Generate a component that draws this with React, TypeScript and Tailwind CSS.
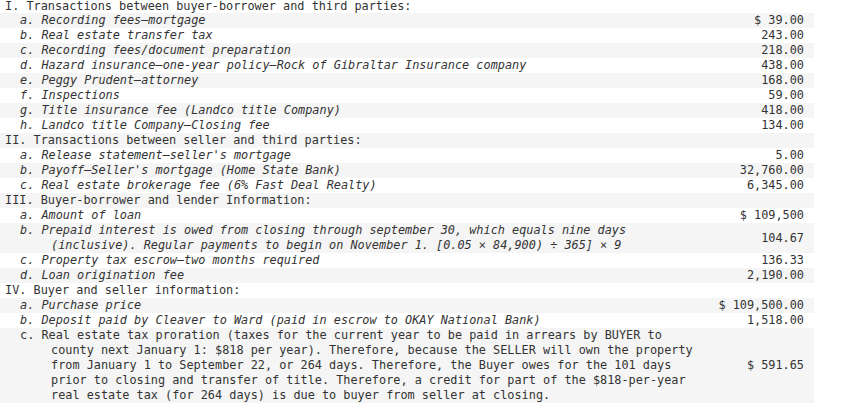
type Row = {
  kind: 'head' | 'item' | 'plain';
  label?: string;
  text: string;
  amount?: string;
};

const ROWS: Row[] = [
  { kind: 'head', label: 'I.', text: 'Transactions between buyer-borrower and third parties:' },
  { kind: 'item', label: 'a.', text: 'Recording fees—mortgage', amount: '$ 39.00' },
  { kind: 'item', label: 'b.', text: 'Real estate transfer tax', amount: '243.00' },
  { kind: 'item', label: 'c.', text: 'Recording fees/document preparation', amount: '218.00' },
  { kind: 'item', label: 'd.', text: 'Hazard insurance—one-year policy—Rock of Gibraltar Insurance company', amount: '438.00' },
  { kind: 'item', label: 'e.', text: 'Peggy Prudent—attorney', amount: '168.00' },
  { kind: 'item', label: 'f.', text: 'Inspections', amount: '59.00' },
  { kind: 'item', label: 'g.', text: 'Title insurance fee (Landco title Company)', amount: '418.00' },
  { kind: 'item', label: 'h.', text: 'Landco title Company—Closing fee', amount: '134.00' },
  { kind: 'head', label: 'II.', text: 'Transactions between seller and third parties:' },
  { kind: 'item', label: 'a.', text: "Release statement—seller's mortgage", amount: '5.00' },
  { kind: 'item', label: 'b.', text: "Payoff—Seller's mortgage (Home State Bank)", amount: '32,760.00' },
  { kind: 'item', label: 'c.', text: 'Real estate brokerage fee (6% Fast Deal Realty)', amount: '6,345.00' },
  { kind: 'head', label: 'III.', text: 'Buyer-borrower and lender Information:' },
  { kind: 'item', label: 'a.', text: 'Amount of loan', amount: '$ 109,500' },
  {
    kind: 'item',
    label: 'b.',
    text: 'Prepaid interest is owed from closing through september 30, which equals nine days (inclusive). Regular payments to begin on November 1. [0.05 × 84,900) ÷ 365] × 9',
    amount: '104.67',
  },
  { kind: 'item', label: 'c.', text: 'Property tax escrow—two months required', amount: '136.33' },
  { kind: 'item', label: 'd.', text: 'Loan origination fee', amount: '2,190.00' },
  { kind: 'head', label: 'IV.', text: 'Buyer and seller information:' },
  { kind: 'item', label: 'a.', text: 'Purchase price', amount: '$ 109,500.00' },
  { kind: 'item', label: 'b.', text: 'Deposit paid by Cleaver to Ward (paid in escrow to OKAY National Bank)', amount: '1,518.00' },
  {
    kind: 'plain',
    label: 'c.',
    text: 'Real estate tax proration (taxes for the current year to be paid in arrears by BUYER to county next January 1: $818 per year). Therefore, because the SELLER will own the property from January 1 to September 22, or 264 days. Therefore, the Buyer owes for the 101 days prior to closing and transfer of title. Therefore, a credit for part of the $818-per-year real estate tax (for 264 days) is due to buyer from seller at closing.',
    amount: '$ 591.65',
  },
];

export default function App() {
  return (
    <div className="w-[843px] h-[411px] overflow-hidden bg-white text-[#333] font-['DejaVu_Sans_Mono',monospace] text-[11.85px] leading-[15px]">
      <div className="w-[814px]">
        {ROWS.map((row, i) => (
          <div
            key={i}
            className={`grid grid-cols-[1fr_110px] items-center ${i % 2 === 1 ? 'bg-[#f5f5f5]' : 'bg-white'} ${i === 0 ? 'h-[13px] leading-[13px]' : ''}`}
          >
            {row.kind === 'head' ? (
              <div className="pl-[5px] whitespace-pre">
                {row.label} {row.text}
              </div>
            ) : (
              <div className={`pl-[51px] -indent-[31px] ${row.kind === 'item' ? 'italic' : ''}`}>
                <span className="whitespace-pre">{row.label} </span>
                {row.text}
              </div>
            )}
            <div className="pr-[10px] text-right whitespace-pre">{row.amount ?? ''}</div>
          </div>
        ))}
      </div>
    </div>
  );
}
